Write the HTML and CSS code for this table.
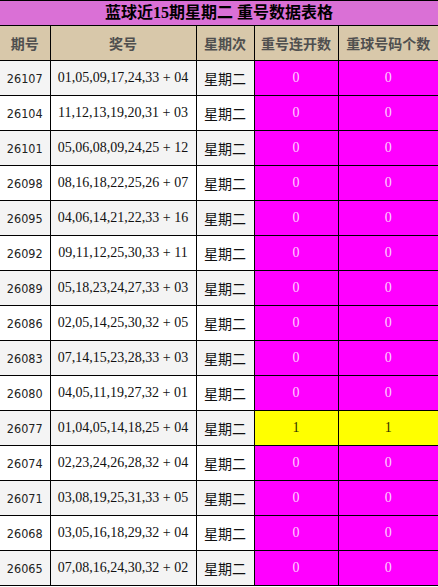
FILE: index.html
```html
<!DOCTYPE html>
<html lang="zh">
<head>
<meta charset="utf-8">
<title>蓝球近15期星期二 重号数据表格</title>
<link rel="stylesheet" href="styles.css">
</head>
<body>
<table class="data">
  <colgroup>
    <col class="c-issue"><col class="c-nums"><col class="c-day"><col class="c-rep"><col class="c-cnt">
  </colgroup>
  <thead>
    <tr class="title-row"><th colspan="5" class="title">蓝球近15期星期二 重号数据表格</th></tr>
    <tr class="head-row"><th>期号</th><th>奖号</th><th>星期次</th><th>重号连开数</th><th>重球号码个数</th></tr>
  </thead>
  <tbody>
    <tr class="odd"><td class="issue">26107</td><td class="nums">01,05,09,17,24,33 + 04</td><td class="day">星期二</td><td class="hit0">0</td><td class="hit0">0</td></tr>
    <tr><td class="issue">26104</td><td class="nums">11,12,13,19,20,31 + 03</td><td class="day">星期二</td><td class="hit0">0</td><td class="hit0">0</td></tr>
    <tr class="odd"><td class="issue">26101</td><td class="nums">05,06,08,09,24,25 + 12</td><td class="day">星期二</td><td class="hit0">0</td><td class="hit0">0</td></tr>
    <tr><td class="issue">26098</td><td class="nums">08,16,18,22,25,26 + 07</td><td class="day">星期二</td><td class="hit0">0</td><td class="hit0">0</td></tr>
    <tr class="odd"><td class="issue">26095</td><td class="nums">04,06,14,21,22,33 + 16</td><td class="day">星期二</td><td class="hit0">0</td><td class="hit0">0</td></tr>
    <tr><td class="issue">26092</td><td class="nums">09,11,12,25,30,33 + 11</td><td class="day">星期二</td><td class="hit0">0</td><td class="hit0">0</td></tr>
    <tr class="odd"><td class="issue">26089</td><td class="nums">05,18,23,24,27,33 + 03</td><td class="day">星期二</td><td class="hit0">0</td><td class="hit0">0</td></tr>
    <tr><td class="issue">26086</td><td class="nums">02,05,14,25,30,32 + 05</td><td class="day">星期二</td><td class="hit0">0</td><td class="hit0">0</td></tr>
    <tr class="odd"><td class="issue">26083</td><td class="nums">07,14,15,23,28,33 + 03</td><td class="day">星期二</td><td class="hit0">0</td><td class="hit0">0</td></tr>
    <tr><td class="issue">26080</td><td class="nums">04,05,11,19,27,32 + 01</td><td class="day">星期二</td><td class="hit0">0</td><td class="hit0">0</td></tr>
    <tr class="odd"><td class="issue">26077</td><td class="nums">01,04,05,14,18,25 + 04</td><td class="day">星期二</td><td class="hit1">1</td><td class="hit1">1</td></tr>
    <tr><td class="issue">26074</td><td class="nums">02,23,24,26,28,32 + 04</td><td class="day">星期二</td><td class="hit0">0</td><td class="hit0">0</td></tr>
    <tr class="odd"><td class="issue">26071</td><td class="nums">03,08,19,25,31,33 + 05</td><td class="day">星期二</td><td class="hit0">0</td><td class="hit0">0</td></tr>
    <tr><td class="issue">26068</td><td class="nums">03,05,16,18,29,32 + 04</td><td class="day">星期二</td><td class="hit0">0</td><td class="hit0">0</td></tr>
    <tr class="odd"><td class="issue">26065</td><td class="nums">07,08,16,24,30,32 + 02</td><td class="day">星期二</td><td class="hit0">0</td><td class="hit0">0</td></tr>
  </tbody>
</table>
</body>
</html>
```
FILE: styles.css
```css
html, body {
  margin: 0;
  padding: 0;
  background: #ffffff;
}
body {
  font-family: "Liberation Serif", "Noto Sans CJK SC", serif;
  font-size: 14px;
  color: #000;
  overflow: hidden;
}
.data {
  border-collapse: collapse;
  table-layout: fixed;
  width: 438px;
}
.c-issue { width: 50px; }
.c-nums { width: 146px; }
.c-day { width: 58px; }
.c-rep { width: 84px; }
.c-cnt { width: 100px; }

.data th, .data td {
  border: 1px solid #000;
  padding: 0;
  text-align: center;
  vertical-align: middle;
  white-space: nowrap;
}
.data tr > :first-child { border-left: none; }
.data tr > :last-child { border-right: none; }

.title-row { height: 25px; }
.title {
  background: #da70d6;
  font-family: "Liberation Serif", "Noto Sans CJK SC", serif;
  font-weight: bold;
  font-size: 16px;
  line-height: 22px;
  color: #000;
}
.head-row { height: 35px; }
.head-row th {
  background: #d8c8aa;
  color: #4f4f4f;
  font-family: "Noto Sans CJK SC", sans-serif;
  font-weight: bold;
  font-size: 14px;
}
tbody tr { height: 35px; background: #ffffff; }
tbody tr.odd { background: #f4f4f4; }

.issue {
  font-family: "DejaVu Sans Condensed", "DejaVu Sans", sans-serif;
  font-size: 12.5px;
  color: #222;
}
.nums {
  font-family: "Liberation Serif", serif;
  font-size: 14px;
  color: #111;
}
.day {
  font-family: "Noto Sans CJK SC", sans-serif;
  font-size: 14px;
  color: #111;
}
.hit0 {
  background: #ff00ff;
  color: #ffd2ff;
  font-family: "Liberation Serif", serif;
  font-size: 14px;
}
.hit1 {
  background: #ffff00;
  color: #333300;
  font-family: "Liberation Serif", serif;
  font-size: 14px;
}
```
